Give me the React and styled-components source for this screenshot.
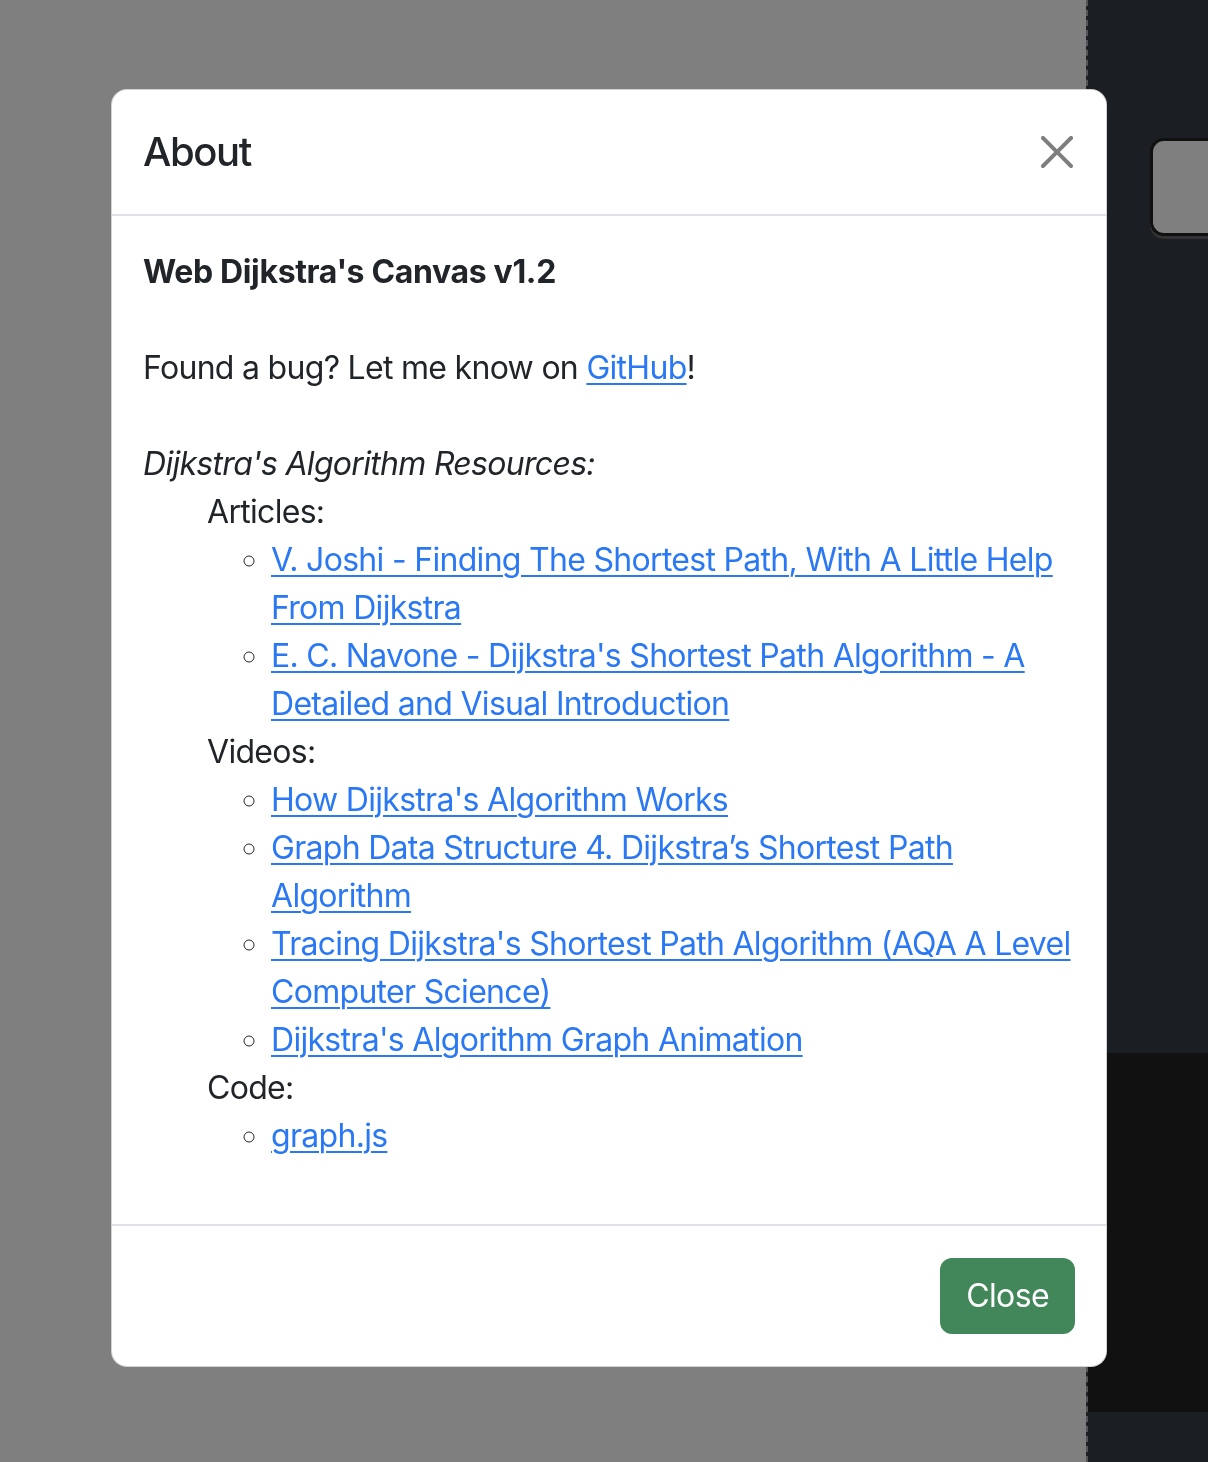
import React from 'react';
import styled, { createGlobalStyle } from 'styled-components';

const GlobalStyle = createGlobalStyle`
    html, body {
        margin: 0;
        padding: 0;
        height: 100%;
        overflow: hidden;
    }
    body {
        font-family: Inter, "Noto Sans", "Liberation Sans", sans-serif;
        color: #212529;
    }
`;

const Page = styled.div`
    display: grid;
    grid-template-columns: 1088px 1fr;
    height: 1462px;
`;

const Canvas = styled.main`
    background: #ffffff;
`;

const Sidebar = styled.aside`
    background: #363c44;
    border-left: 2px dashed #aaaaaa;
    margin-left: -2px;
    display: flex;
    flex-direction: column;
    padding-top: 138px;
`;

const Panel = styled.div`
    margin-left: 62px;
    height: 92px;
    background: #ffffff;
    border: 3px solid #202020;
    border-right: none;
    border-radius: 14px 0 0 14px;
    box-shadow: 0 3px 0 #666666;
`;

const DarkBlock = styled.div`
    margin-top: 817px;
    height: 359px;
    background: #222222;
`;

const Backdrop = styled.div`
    position: fixed;
    inset: 0;
    background: rgba(0, 0, 0, 0.5);
    padding: 89px 0 0 111px;
`;

const Dialog = styled.div`
    width: 996px;
    box-sizing: border-box;
    background: #ffffff;
    border: 1px solid rgba(0, 0, 0, 0.175);
    border-radius: 16px;
    overflow: hidden;
`;

const Header = styled.header`
    display: flex;
    align-items: center;
    padding: 32px 32px 32px 31px;
    border-bottom: 2px solid #dee2e6;
`;

const Title = styled.h1`
    margin: 0;
    font-size: 40px;
    font-weight: 500;
    line-height: 60px;
    letter-spacing: -1.4px;
    color: #212529;
`;

const CloseX = styled.button`
    margin: -16px -15px -16px auto;
    padding: 16px;
    border: none;
    background: transparent;
    color: #000;
    opacity: 0.5;
    display: flex;
    cursor: pointer;
`;

const Body = styled.div`
    padding: 32px 32px 32px 31px;
    font-size: 32px;
    line-height: 48px;
    letter-spacing: -0.7px;
`;

const Strong = styled.strong`
    letter-spacing: -0.35px;
`;

const Link = styled.a`
    color: #2a78f4;
    text-decoration: underline;
    text-decoration-thickness: 2px;
    text-underline-offset: 4px;
`;

const Groups = styled.ul`
    list-style: none;
    margin: 0 0 32px;
    padding-left: 64px;
`;

const Items = styled.ul`
    list-style: circle;
    margin: 0;
    padding-left: 64px;

    li::marker {
        color: #212529;
    }
`;

const Footer = styled.footer`
    display: flex;
    justify-content: flex-end;
    padding: 24px 23px 24px 24px;
    border-top: 2px solid #dee2e6;
`;

const Button = styled.button`
    margin: 8px;
    padding: 12px 24px;
    font-family: inherit;
    font-size: 32px;
    line-height: 48px;
    letter-spacing: -0.6px;
    color: #ffffff;
    background: #418759;
    border: 2px solid #418759;
    border-radius: 12px;
    cursor: pointer;
`;

const resources = [
    {
        label: 'Articles:',
        links: [
            'V. Joshi - Finding The Shortest Path, With A Little Help From Dijkstra',
            "E. C. Navone - Dijkstra's Shortest Path Algorithm - A Detailed and Visual Introduction"
        ]
    },
    {
        label: 'Videos:',
        links: [
            "How Dijkstra's Algorithm Works",
            'Graph Data Structure 4. Dijkstra\u2019s Shortest Path Algorithm',
            "Tracing Dijkstra's Shortest Path Algorithm (AQA A Level Computer Science)",
            "Dijkstra's Algorithm Graph Animation"
        ]
    },
    {
        label: 'Code:',
        links: ['graph.js']
    }
];

const XIcon = () => (
    <svg width="32" height="32" viewBox="0 0 16 16" fill="currentColor">
        <path d="M.293.293a1 1 0 0 1 1.414 0L8 6.586 14.293.293a1 1 0 1 1 1.414 1.414L9.414 8l6.293 6.293a1 1 0 0 1-1.414 1.414L8 9.414l-6.293 6.293a1 1 0 0 1-1.414-1.414L6.586 8 .293 1.707a1 1 0 0 1 0-1.414z" />
    </svg>
);

const App = () => (
    <>
        <GlobalStyle />
        <Page>
            <Canvas />
            <Sidebar>
                <Panel />
                <DarkBlock />
            </Sidebar>
        </Page>
        <Backdrop>
            <Dialog>
                <Header>
                    <Title>About</Title>
                    <CloseX aria-label="Close">
                        <XIcon />
                    </CloseX>
                </Header>
                <Body>
                    <Strong>Web Dijkstra's Canvas v1.2</Strong>
                    <br />
                    <br />
                    Found a bug? Let me know on <Link href="#">GitHub</Link>!
                    <br />
                    <br />
                    <i>Dijkstra's Algorithm Resources:</i>
                    <Groups>
                        {resources.map(group => (
                            <li key={group.label}>
                                {group.label}
                                <Items>
                                    {group.links.map(text => (
                                        <li key={text}>
                                            <Link href="#">{text}</Link>
                                        </li>
                                    ))}
                                </Items>
                            </li>
                        ))}
                    </Groups>
                </Body>
                <Footer>
                    <Button>Close</Button>
                </Footer>
            </Dialog>
        </Backdrop>
    </>
);

export default App;
